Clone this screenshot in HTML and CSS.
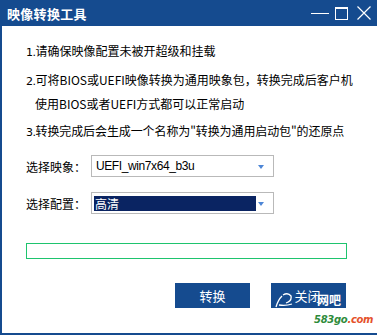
FILE: index.html
```html
<!DOCTYPE html>
<html lang="zh-CN">
<head>
<meta charset="utf-8">
<title>映像转换工具</title>
<link rel="stylesheet" href="styles.css">
</head>
<body>
<div class="window">
  <div class="titlebar">
    <span class="title">映像转换工具</span>
    <div class="controls">
      <svg class="ctl" width="18" height="20" viewBox="0 0 18 20"><line x1="0" y1="11.5" x2="18" y2="11.5" stroke="#fff" stroke-width="1"/></svg>
      <svg class="ctl" width="14" height="20" viewBox="0 0 14 20"><rect x="0.5" y="5.5" width="12" height="12" fill="none" stroke="#fff" stroke-width="1"/><line x1="0" y1="6.5" x2="13" y2="6.5" stroke="#fff" stroke-width="1"/></svg>
      <svg class="ctl" width="14" height="20" viewBox="0 0 14 20"><path d="M0.5 4.5 L13.5 17.5 M13.5 4.5 L0.5 17.5" stroke="#fff" stroke-width="1.2" fill="none"/></svg>
    </div>
  </div>
  <div class="content">
    <p class="line l1"><span class="num">1.</span>请确保映像配置未被开超级和挂载</p>
    <p class="line l2"><span class="num">2.</span>可将BIOS或UEFI映像转换为通用映象包，转换完成后客户机</p>
    <p class="line l2b">使用BIOS或者UEFI方式都可以正常启动</p>
    <p class="line l3"><span class="num">3.</span>转换完成后会生成一个名称为"转换为通用启动包"的还原点</p>
    <div class="row r1">
      <span class="label">选择映象：</span>
      <div class="select"><span class="val">UEFI_win7x64_b3u</span><span class="arrow"></span></div>
    </div>
    <div class="row r2">
      <span class="label">选择配置：</span>
      <div class="select"><span class="val sel">高清</span><span class="arrow"></span></div>
    </div>
    <div class="progress"></div>
    <div class="buttons">
      <div class="btn">转换</div>
      <div class="btn close">关闭
        <svg class="wm-curve" width="22" height="16" viewBox="0 0 22 16"><path d="M2 15 Q4 8 8 4 M9 3 Q14 0 17 4 Q18 9 12 11 M5 13 Q12 14 18 12" stroke="#fff" stroke-width="1.3" fill="none"/></svg>
        <span class="wm-text">网吧</span>
      </div>
    </div>
  </div>
  <div class="watermark"><span class="g">583go</span><span class="o">.com</span></div>
</div>
</body>
</html>
```

FILE: styles.css
```css
* { box-sizing: border-box; }
html, body { margin: 0; padding: 0; background: #fff; }
body {
  font-family: "Noto Sans CJK SC", "Microsoft YaHei", sans-serif;
  font-size: 12px;
  color: #000;
}
.window {
  position: relative;
  width: 377px;
  height: 335px;
  border-left: 2px solid #154b8f;
  border-bottom: 2px solid #154b8f;
  overflow: hidden;
  background: #fff;
}
.titlebar {
  height: 26px;
  background: #154b8f;
  display: flex;
  align-items: center;
  justify-content: space-between;
  padding: 0 6px 0 5px;
}
.title {
  color: #fff;
  font-weight: bold;
  font-size: 13px;
  letter-spacing: 0.3px;
}
.controls {
  display: flex;
  align-items: center;
  gap: 6px;
  margin-top: -2px;
}
.ctl { display: block; }
.controls .ctl:last-child { margin-left: 2px; }
.content {
  padding-left: 24px;
}
.line {
  margin: 0;
  height: 24px;
  line-height: 24px;
  white-space: nowrap;
}
.num { font-family: "DejaVu Sans", sans-serif; font-size: 11px; letter-spacing: -0.5px; }
.l1 { margin-top: 13px; }
.l2 { margin-top: 5px; }
.l2b { padding-left: 9px; }
.l3 { margin-top: 3px; letter-spacing: -0.1px; }
.row {
  display: flex;
  align-items: center;
  height: 22px;
}
.r1 { margin-top: 12px; }
.r2 { margin-top: 15px; }
.label { width: 65px; }
.select {
  width: 183px;
  height: 22px;
  border: 1px solid #b9b9b9;
  display: flex;
  align-items: center;
  padding: 0 0 0 2px;
  position: relative;
}
.val {
  font-family: "Liberation Sans", sans-serif;
  font-size: 12px;
  padding-left: 2px;
  letter-spacing: -0.4px;
}
.val.sel {
  font-family: "Noto Sans CJK SC", sans-serif;
  background: #0a2462;
  color: #fff;
  width: 162px;
  height: 15px;
  line-height: 15px;
  letter-spacing: 0;
  padding-left: 1px;
}
.arrow {
  position: absolute;
  right: 9px;
  top: 9px;
  width: 0;
  height: 0;
  border-left: 3.5px solid transparent;
  border-right: 3.5px solid transparent;
  border-top: 4px solid #4d86d6;
}
.progress {
  margin-top: 29px;
  width: 321px;
  height: 16px;
  border: 1px solid #1ec46e;
}
.buttons {
  display: flex;
  gap: 21px;
  margin-top: 24px;
  padding-left: 149px;
}
.btn {
  width: 75px;
  height: 25px;
  background: #154b8f;
  color: #fff;
  font-size: 13px;
  display: flex;
  align-items: center;
  justify-content: center;
  position: relative;
  overflow: hidden;
}
.close { padding-right: 2px; }
.wm-curve {
  position: absolute;
  left: 3px;
  top: 9px;
}
.wm-text {
  position: absolute;
  left: 46px;
  top: 10px;
  font-size: 12px;
  font-weight: bold;
  color: #fff;
  line-height: 14px;
  white-space: nowrap;
}
.watermark {
  position: absolute;
  left: 312px;
  top: 314px;
  font-family: "DejaVu Sans", sans-serif;
  font-size: 10px;
  font-weight: bold;
  font-style: italic;
  letter-spacing: -0.3px;
}
.watermark .g { color: #2e8b3a; }
.watermark .o { color: #e5512b; }
```
